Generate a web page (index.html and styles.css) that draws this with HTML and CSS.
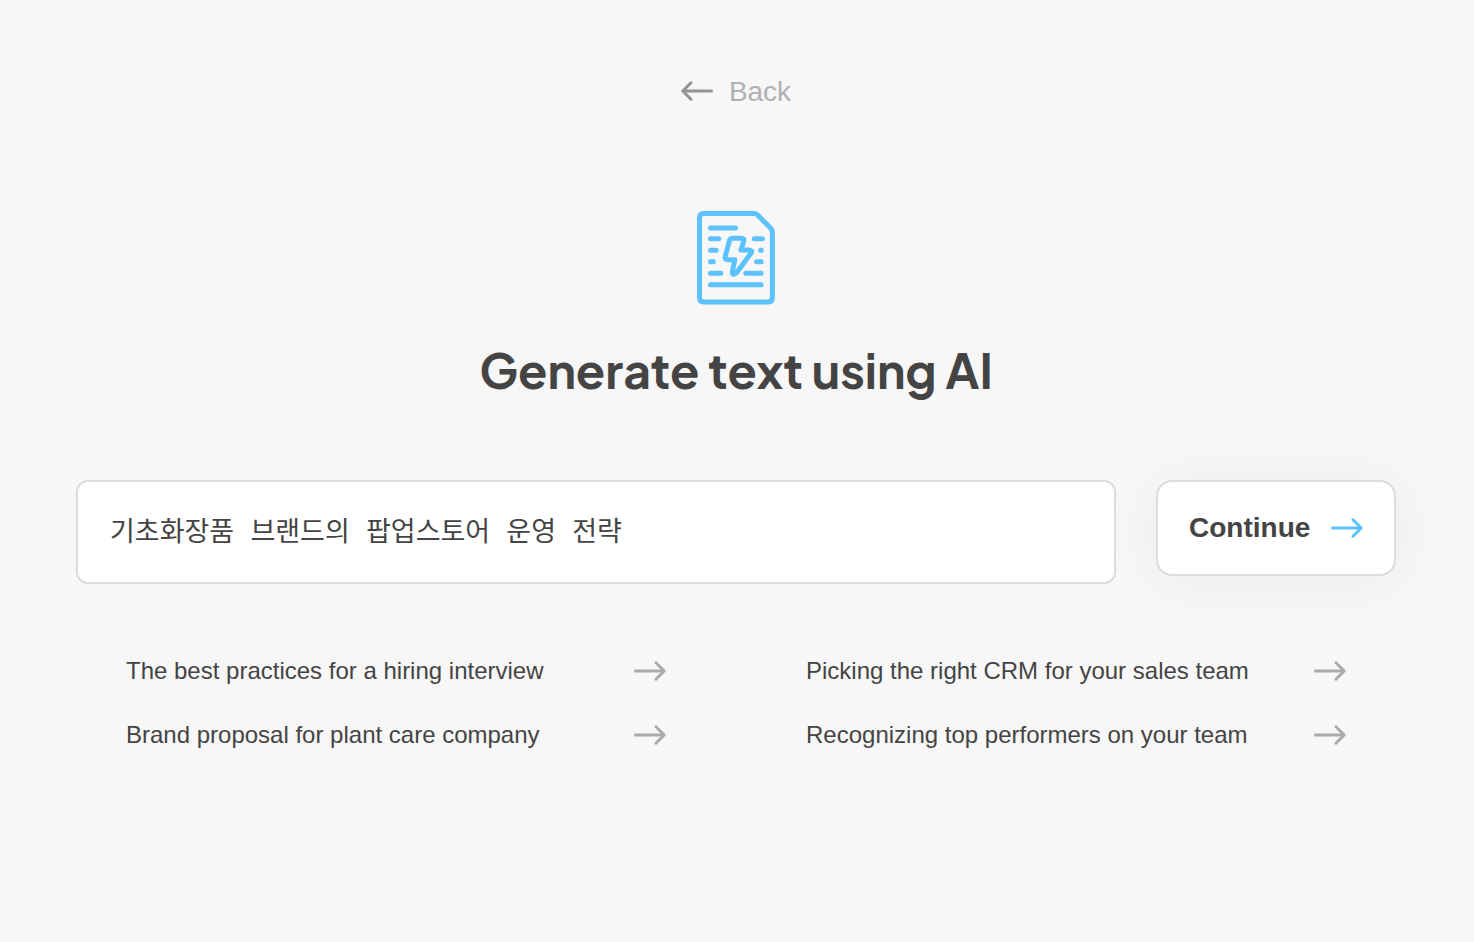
FILE: index.html
```html
<!DOCTYPE html>
<html lang="en">
  <head>
    <meta charset="UTF-8" />
    <meta name="viewport" content="width=device-width, initial-scale=1" />
    <title>Generate text using AI</title>
    <link rel="stylesheet" href="styles.css">
  </head>
  <body>
    <svg class="sprite" aria-hidden="true">
      <symbol id="arrow-right" viewBox="0 0 32 20">
        <path d="M1.5 10H30M22 1.8L30.2 10L22 18.2" />
      </symbol>
      <symbol id="arrow-left" viewBox="0 0 32 20">
        <path d="M30.5 10H2M10 1.8L1.8 10L10 18.2" />
      </symbol>
    </svg>

    <main>
      <a href="#" class="back">
        <svg class="arrow" aria-hidden="true"><use href="#arrow-left" /></svg>
        <span>Back</span>
      </a>

      <svg class="logo" viewBox="0 0 80 96" aria-hidden="true">
        <path d="M7.5 3.6H58Q60 3.6 61.5 5L75 18.5Q76.4 20 76.4 22V87.5Q76.4 92 72 92H8Q3.5 92 3.5 87.5V8Q3.5 3.6 7.5 3.6Z" />
        <path d="M14.5 18H39.5M14.5 28.7H22.8M14.5 40.3H20.2M14.5 51.8H17.3M14.5 63.2H24.8M14.5 74.8H65.2M58.3 28.7H66.4M64.6 40.3H65.4M60.6 51.8H65.2M49.8 63.2H65.2" />
        <path d="M36.6 28.2H45.6Q48.6 28.2 47.8 31L44.9 40H52.7Q57.5 40.3 54.7 43.6L40.9 62.3Q35.8 67 36.5 61.2L38.8 49.7H31.8Q28.4 49.7 29.2 46.5L33.4 30.8Q34.2 28.2 36.6 28.2Z" />
      </svg>

      <h1>Generate text using AI</h1>

      <form class="prompt">
        <input type="text" aria-label="Topic" value="기초화장품 브랜드의 팝업스토어 운영 전략" />
        <button type="button">
          <span>Continue</span>
          <svg class="arrow" aria-hidden="true"><use href="#arrow-right" /></svg>
        </button>
      </form>

      <nav class="suggestions">
        <a href="#">
          <span>The best practices for a hiring interview</span>
          <svg class="arrow" aria-hidden="true"><use href="#arrow-right" /></svg>
        </a>
        <a href="#">
          <span>Picking the right CRM for your sales team</span>
          <svg class="arrow" aria-hidden="true"><use href="#arrow-right" /></svg>
        </a>
        <a href="#">
          <span>Brand proposal for plant care company</span>
          <svg class="arrow" aria-hidden="true"><use href="#arrow-right" /></svg>
        </a>
        <a href="#">
          <span>Recognizing top performers on your team</span>
          <svg class="arrow" aria-hidden="true"><use href="#arrow-right" /></svg>
        </a>
      </nav>
    </main>
  </body>
</html>
```
FILE: styles.css
```css
* {
  box-sizing: border-box;
}

body {
  background-color: #f7f7f7;
  color: #444;
  font-family: "Liberation Sans", Arial, sans-serif;
  margin: 0;
}

main {
  align-items: center;
  display: flex;
  flex-direction: column;
  padding: 76px 78px 40px 76px;
}

a {
  color: inherit;
  text-decoration: none;
}

svg {
  fill: none;
  stroke-linecap: round;
  stroke-linejoin: round;
}

.sprite {
  display: none;
}

.arrow {
  flex-shrink: 0;
  height: 20px;
  stroke: #aaa;
  stroke-width: 3;
  width: 32px;
}

.back {
  align-items: baseline;
  color: #b0b0b0;
  display: flex;
  font-size: 28px;
  gap: 16px;
  line-height: 32px;
}

.back .arrow {
  stroke: #949494;
}

.logo {
  height: 96px;
  margin-top: 102px;
  stroke: #5bc2fb;
  stroke-width: 5;
  width: 80px;
}

h1 {
  font-family: "Plus Jakarta Sans", Inter, sans-serif;
  font-size: 48px;
  font-weight: 700;
  line-height: 60px;
  margin: 34px 0 80px;
  text-align: center;
}

.prompt {
  align-items: flex-start;
  display: flex;
  gap: 40px;
  width: 100%;
}

input {
  background-color: #fff;
  border: 2px solid #dcdcdc;
  border-radius: 12px;
  color: #444;
  flex: 1;
  font-family: "Liberation Mono", "Noto Sans CJK KR", monospace;
  font-size: 27px;
  height: 104px;
  min-width: 0;
  padding: 0 32px 6px;
}

button {
  align-items: center;
  background-color: #fff;
  border: 2px solid #dcdcdc;
  border-radius: 16px;
  box-shadow: 0 4px 60px rgba(0, 0, 0, 0.05);
  color: #444;
  cursor: pointer;
  display: flex;
  font-family: inherit;
  font-size: 28px;
  font-weight: 700;
  height: 96px;
  justify-content: space-between;
  padding: 0 31px;
  width: 240px;
}

button .arrow {
  stroke: #5bc2fb;
}

.suggestions {
  display: grid;
  font-size: 24px;
  gap: 32px 140px;
  grid-template-columns: 1fr 1fr;
  line-height: 32px;
  margin-top: 71px;
  padding: 0 50px;
  width: 100%;
}

.suggestions a {
  align-items: center;
  display: flex;
  justify-content: space-between;
}

@media (max-width: 900px) {
  .prompt {
    flex-direction: column;
  }

  input {
    flex: none;
    width: 100%;
  }

  .suggestions {
    grid-template-columns: 1fr;
    padding: 0;
  }
}
```
